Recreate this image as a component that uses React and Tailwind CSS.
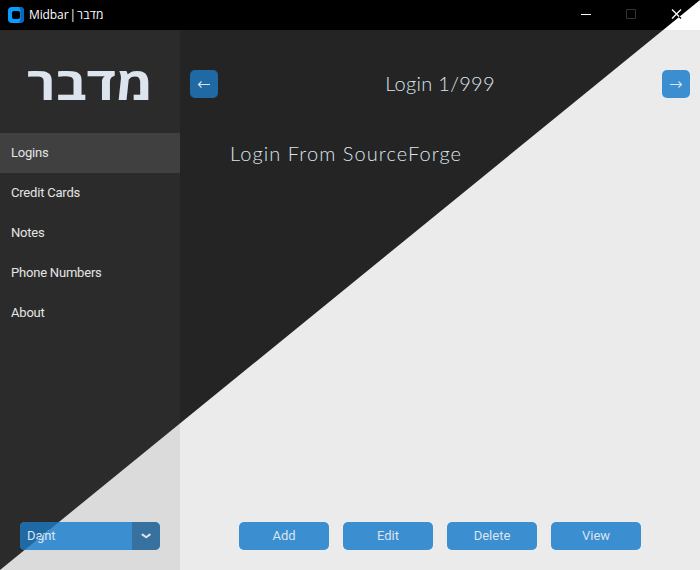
const navItems = ['Logins', 'Credit Cards', 'Notes', 'Phone Numbers', 'About'];
const actions = ['Add', 'Edit', 'Delete', 'View'];

function AppLogo() {
  return (
    <svg width="16" height="16" viewBox="0 0 16 16">
      <rect width="16" height="16" rx="4" fill="#0a9bff" />
      <path d="M12 0a4 4 0 0 1 4 4v8a4 4 0 0 1-4 4h-1l1.500-3V3L11 0z" fill="#0567b8" />
      <rect x="4" y="4" width="8" height="8" rx="2" fill="#000" />
    </svg>
  );
}

function TitleBar() {
  return (
    <header className="flex h-[30px] items-center pl-2">
      <AppLogo />
      <div className="ml-[5px] flex font-['Open_Sans',sans-serif] text-[12px] leading-none text-white">
        <span className="tracking-[-0.1px] [word-spacing:-2px]">Midbar |</span>
        <span dir="rtl" className="ml-px tracking-[0.2px]">מדבר</span>
      </div>
      <div className="ml-auto flex pr-px">
        <svg width="45" height="30" viewBox="0 0 45 30" className="text-white">
          <path d="M17 14.500h10" stroke="currentColor" />
        </svg>
        <svg width="45" height="30" viewBox="0 0 45 30">
          <path d="M17.500 9.500h9v9h-9z" fill="none" stroke="#333" />
        </svg>
        <svg width="45" height="30" viewBox="0 0 45 30">
          <path d="M18 9.500l9 9M27 9.500l-9 9" stroke="#fff" strokeWidth="1.300" />
          <path d="M25 16.500l2 2" stroke="#000" strokeWidth="1.300" />
        </svg>
      </div>
    </header>
  );
}

// The label and its background change from the dark theme to the light one along the diagonal.
function ThemeSelect() {
  return (
    <button className="flex h-7 w-[140px] overflow-hidden rounded-[5px] bg-[#3b8ed0] text-left text-[13px] leading-7 text-[#dce4ee]">
      <span className="relative w-28">
        <span className="absolute inset-0 bg-[#3b8ed0] pl-[7px] tracking-[-0.1px]">Light</span>
        <span className="absolute inset-0 bg-[#1f6aa5] pl-[7px] [clip-path:polygon(0_0,39px_0,4.600px_28px,0_28px)]">
          Dark
        </span>
      </span>
      <span className="flex h-7 w-7 items-center justify-center bg-[#36719f]">
        <svg width="10" height="6" viewBox="0 0 10 6" fill="none">
          <path d="M1.500 1.600L5.200 4.200l3.500-2.600" stroke="#dce4ee" strokeWidth="2" strokeLinecap="round" strokeLinejoin="round" />
        </svg>
      </span>
    </button>
  );
}

function Sidebar() {
  return (
    <aside className="flex w-[180px] flex-col">
      <h1
        dir="rtl"
        className="flex h-[103px] scale-x-[1.17] items-center justify-center font-['Open_Sans',sans-serif] text-[46px] font-bold leading-none text-[#dce4ee]"
      >
        מדבר
      </h1>
      <nav className="flex flex-col text-[13px] tracking-[-0.2px] text-[#e5e5e5]">
        {navItems.map((item, i) => (
          <a key={item} className={`flex h-10 items-center pl-[11px] ${i === 0 ? 'bg-[#404040]' : ''}`}>
            {item}
          </a>
        ))}
      </nav>
      <div className="mt-auto px-5 pb-5">
        <ThemeSelect />
      </div>
    </aside>
  );
}

function ArrowButton({ direction }) {
  const left = direction === 'left';
  return (
    <button className={`flex size-7 items-center justify-center rounded-[5px] ${left ? 'bg-[#1f6aa5]' : 'bg-[#3b8ed0]'}`}>
      <svg width="14" height="8" viewBox="0 0 14 8" fill="none" stroke="#dce4ee" strokeWidth="1.100">
        <path d={left ? 'M13 4.500H1.500M4.500 1.500L1.500 4.500L4.500 7.500' : 'M1 4.500h11.500M9.500 1.500l3 3L9.500 7.500'} />
      </svg>
    </button>
  );
}

function Main() {
  return (
    <main className="flex flex-1 flex-col px-2.5 pt-10 pb-5">
      <div className="flex h-7 items-center justify-between">
        <ArrowButton direction="left" />
        <h2 className="pb-0.5 font-['Lato',sans-serif] text-[20px] font-light tracking-[0.3px] text-[#dce4ee]">Login 1/999</h2>
        <ArrowButton direction="right" />
      </div>
      <p className="mt-[41px] pl-10 font-['Lato',sans-serif] text-[20px] font-light leading-7 tracking-[1.08px] text-[#dce4ee]">
        Login From SourceForge
      </p>
      <div className="mt-auto flex justify-center gap-3.5">
        {actions.map((a) => (
          <button key={a} className="h-7 w-[90px] rounded-[5px] bg-[#3b8ed0] text-[13px] text-[#dce4ee]">
            {a}
          </button>
        ))}
      </div>
    </main>
  );
}

// Window surfaces of one theme: title bar, sidebar and content area.
function Surface({ dark }) {
  return (
    <div
      className={`absolute inset-0 flex flex-col ${dark ? '[clip-path:polygon(0_0,700px_0,0_570px)]' : ''}`}
    >
      <div className={`h-[30px] ${dark ? 'bg-black' : 'bg-white'}`} />
      <div className="flex flex-1">
        <div className={`w-[180px] ${dark ? 'bg-[#2b2b2b]' : 'bg-[#dbdbdb]'}`} />
        <div className={`flex-1 ${dark ? 'bg-[#242424]' : 'bg-[#ebebeb]'}`} />
      </div>
    </div>
  );
}

export default function App() {
  return (
    <div className="relative h-[570px] w-[700px] overflow-hidden font-['Roboto',sans-serif]">
      <Surface />
      <Surface dark />
      <div className="relative flex h-full flex-col">
        <TitleBar />
        <div className="flex flex-1">
          <Sidebar />
          <Main />
        </div>
      </div>
    </div>
  );
}
